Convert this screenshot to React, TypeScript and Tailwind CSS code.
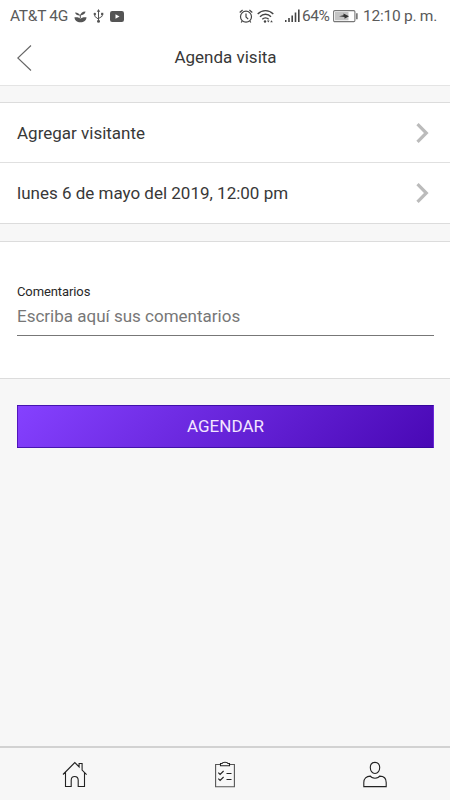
import React from 'react';

const SproutIcon = () => (
  <svg width="13" height="13" viewBox="0 0 13 13" fill="#555">
    <path d="M.5 7.200h3l3 1.300 3-1.300h3C12.300 10.500 10 12.300 6.500 12.300S.700 10.500.500 7.200Z" />
    <path d="M6.300 5.800C5.500 3.500 4 2.500 1 2.400c.500 2 2.300 2.900 4.400 3M6.300 5.800C6.500 3.300 8.300 1.500 11.500 1.600c-.300 2.200-1.900 3.400-4.300 3.600" />
    <path d="M6.300 4.500v3.500" stroke="#555" />
  </svg>
);

const UsbIcon = () => (
  <svg width="11" height="14" viewBox="0 0 11 14" fill="none" stroke="#555">
    <path d="M5.500 2v10M1.800 5.200v2.200l3.700 2.800M9.200 5v2.200L5.500 9.600" />
    <path d="M5.500 0 7.200 2.700H3.800Z" fill="#555" stroke="none" />
    <circle cx="5.500" cy="12.300" r="1.500" fill="#555" stroke="none" />
    <circle cx="1.800" cy="5" r="1.200" fill="#555" stroke="none" />
    <path d="M8.100 3.800h2.200V6H8.100z" fill="#555" stroke="none" />
  </svg>
);

const VideoIcon = () => (
  <svg width="14" height="11" viewBox="0 0 14 11">
    <rect width="14" height="11" rx="2.200" fill="#555" />
    <path d="m5.500 3.300 4 2.200-4 2.200Z" fill="#fff" />
  </svg>
);

const AlarmIcon = () => (
  <svg width="14" height="15" viewBox="0 0 14 15" fill="none" stroke="#444" strokeWidth="1.200">
    <circle cx="7" cy="7.700" r="5.500" />
    <path d="M7 4.400v3.500l2.200 2.200M.700 3.500 3.600 1M13.300 3.500 10.400 1M3.200 12l-1 1.500M10.800 12l1 1.500" />
  </svg>
);

const WifiIcon = () => (
  <svg width="17" height="15" viewBox="0 0 17 15" fill="none" stroke="#444" strokeWidth="1.400">
    <path d="M.700 4.900C5.100.500 11.900.500 16.300 4.900M3 7.700c3.100-3.200 7.900-3.200 11 0M5.300 10.300c1.800-1.900 4.600-1.900 6.400 0" />
    <circle cx="8" cy="12.500" r="1.200" fill="#444" stroke="none" />
    <path d="M10 11.500h2.600L11.300 13.500ZM13.200 13.200h2.600l-1.300-2Z" fill="#444" stroke="none" />
  </svg>
);

const SignalIcon = () => (
  <svg width="15" height="14" viewBox="0 0 15 14" fill="#444">
    <path d="M0 11h1.500v2H0zM3.200 9h1.600v4H3.200zM6.400 6.500H8V13H6.400zM9.700 3.500h1.600V13H9.700zM13 .5h1.600V13H13z" />
  </svg>
);

const BatteryIcon = () => (
  <svg width="25" height="13" viewBox="0 0 25 13">
    <rect x=".6" y=".6" width="21.300" height="11" rx="1.200" fill="#fff" stroke="#777" strokeWidth="1.100" />
    <path d="M2 2h13.500v8.300H2z" fill="#c4c4c4" />
    <path d="M6 6.200 10.500 5.200V3.500l5.500 2.700-4.500 2.600V7Z" fill="#333" />
    <path d="M23.900 3.300v6" stroke="#444" strokeWidth="1.200" />
  </svg>
);

const StatusBar = () => (
  <div className="flex h-8 items-center justify-between pl-[10px] pr-[13px] text-[15.500px] text-[#5a5a5a]">
    <div className="flex items-center">
      <span className="w-[64px] whitespace-nowrap pt-px tracking-[-0.300px]">AT&amp;T 4G</span>
      <SproutIcon />
      <span className="ml-[6px]"><UsbIcon /></span>
      <span className="ml-[6px]"><VideoIcon /></span>
    </div>
    <div className="flex items-center">
      <AlarmIcon />
      <span className="ml-1"><WifiIcon /></span>
      <span className="ml-[11px]"><SignalIcon /></span>
      <span className="ml-[2px] w-[31px] whitespace-nowrap pt-px tracking-[-0.400px]">64%</span>
      <BatteryIcon />
      <span className="ml-[5px] w-[74px] whitespace-nowrap pt-px tracking-[-0.250px]">12:10 p. m.</span>
    </div>
  </div>
);

const ListRow = ({ label }: { label: string }) => (
  <button className="flex h-full w-full items-center justify-between pl-[17px] pr-[21px] text-left">
    <span className="pt-[2px]">{label}</span>
    <svg width="13" height="20" viewBox="0 0 13 20" fill="none" stroke="#bbb" strokeWidth="3.200">
      <path d="m1.500 1.200 8.800 8.800-8.800 8.800" />
    </svg>
  </button>
);

const HomeIcon = () => (
  <svg width="26" height="27" viewBox="0 0 26 27" fill="none" stroke="#222" strokeWidth="1.100">
    <path d="M1 13.500 12.800 1.500l4.300 4.300V2.500h3v6.600l4.500 4.500M3.500 11.200v14.300h5.700v-6.300c0-4.900 7-4.900 7 0v6.300h6.300V11.600" />
  </svg>
);

const ClipboardIcon = () => (
  <svg width="20" height="27" viewBox="0 0 20 27" fill="none" stroke="#222" strokeWidth="1.100">
    <path d="M5.500 3.500H.600v22.200h18.800V3.500h-4.900" stroke="#555" />
    <path d="M5.500 4.800V2.500H7C7.500.900 12.500.900 13 2.500h1.500v2.300ZM3.300 11.700l1.800 1.800 3.500-3.500M3.300 17.700l1.800 1.800L8.600 16M11.500 12.500h5M11.500 18.500h5" />
  </svg>
);

const ProfileIcon = () => (
  <svg width="24" height="27" viewBox="0 0 24 27" fill="none" stroke="#222" strokeWidth="1.100">
    <path d="M12 1.400c-3.200 0-4.700 2.200-4.700 5.100s1.700 6 4.700 6 4.700-3.100 4.700-6-1.500-5.100-4.700-5.100Z" />
    <path d="M.800 25.600v-4.200c0-3.800 2.500-6.300 6.500-6.300 1.300 2.800 8.100 2.800 9.400 0 4 0 6.500 2.500 6.500 6.300v4.200Z" />
  </svg>
);

const tabs = [
  { label: 'Inicio', icon: HomeIcon },
  { label: 'Visitas', icon: ClipboardIcon },
  { label: 'Perfil', icon: ProfileIcon }
];

export default function App() {
  return (
    <div className="flex h-[800px] w-[450px] flex-col bg-[#f7f7f7] font-['Roboto',sans-serif] text-[17px] text-[#383838]">
      <div className="h-[86px] border-b border-[#e4e4e4] bg-white">
        <StatusBar />
        <header className="grid h-[51px] grid-cols-[1fr_auto_1fr] items-center pl-[18px] pr-[17px]">
          <button aria-label="Volver" className="-ml-px">
            <svg width="15" height="26" viewBox="0 0 15 26" fill="none" stroke="#666" strokeWidth="1.100">
              <path d="M14 .500.800 13 14 25.500" />
            </svg>
          </button>
          <h1>Agenda visita</h1>
        </header>
      </div>

      <div className="mt-4 border-y border-[#dcdcdc] bg-white">
        <div className="h-[60px] border-b border-[#e0e0e0]">
          <ListRow label="Agregar visitante" />
        </div>
        <div className="h-[60px]">
          <ListRow label="lunes 6 de mayo del 2019, 12:00 pm" />
        </div>
      </div>

      <div className="mt-[17px] h-[138px] border-y border-[#dcdcdc] bg-white pl-[17px] pr-4 pt-[41px]">
        <label htmlFor="comments" className="block text-[13px] leading-[18px] tracking-[-0.100px] text-[#282828]">Comentarios</label>
        <input
          id="comments"
          placeholder="Escriba aquí sus comentarios"
          className="block h-[35px] w-full border-b border-[#777] bg-transparent pb-[4px] outline-none placeholder:text-[#777]"
        />
      </div>

      <button className="ml-[17px] mr-4 mt-[26px] h-[43px] border border-x-[#5a1cc0]/60 border-y-[#2e0592]/70 bg-linear-[135deg] from-[#8541ff] to-[#4908b5] pt-px text-[#f3e6ff]">
        AGENDAR
      </button>

      <nav className="mt-auto grid h-[54px] grid-cols-3 border-t-2 border-[#d2d2d2] pt-[13px]">
        {tabs.map((tab) => (
          <button key={tab.label} aria-label={tab.label} className="flex justify-center">
            <tab.icon />
          </button>
        ))}
      </nav>
    </div>
  );
}
